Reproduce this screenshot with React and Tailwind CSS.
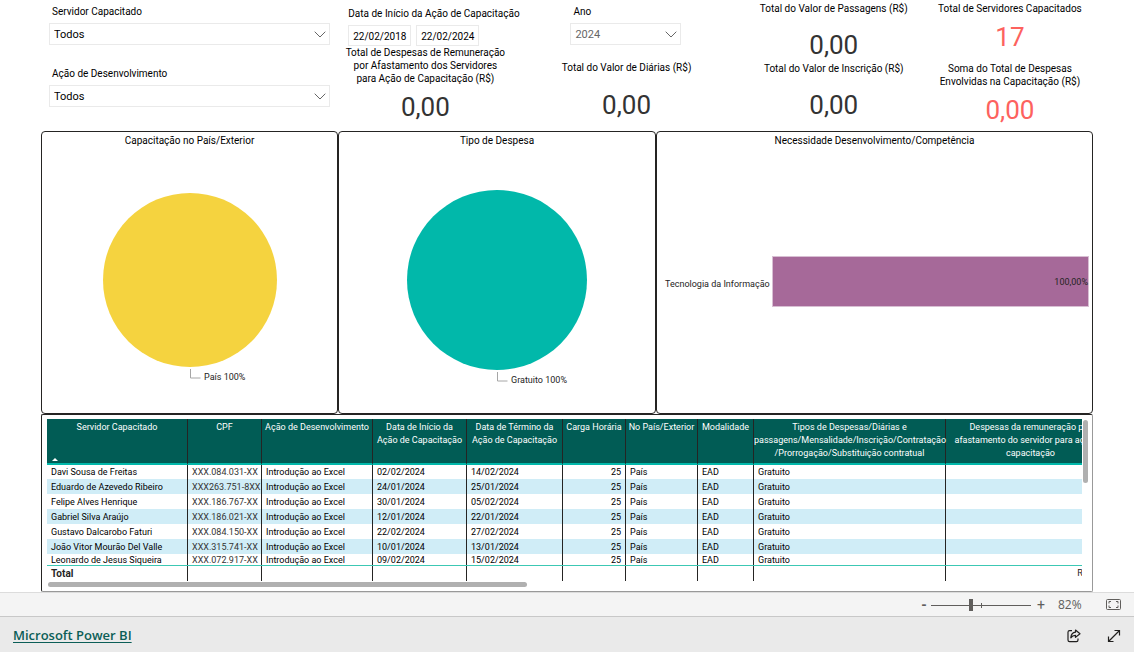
import React, { useState } from 'react';

const people = [
    { name: 'Davi Sousa de Freitas', cpf: 'XXX.084.031-XX', start: '02/02/2024', end: '14/02/2024' },
    { name: 'Eduardo de Azevedo Ribeiro', cpf: 'XXX263.751-8XX', start: '24/01/2024', end: '25/01/2024' },
    { name: 'Felipe Alves Henrique', cpf: 'XXX.186.767-XX', start: '30/01/2024', end: '05/02/2024' },
    { name: 'Gabriel Silva Araújo', cpf: 'XXX.186.021-XX', start: '12/01/2024', end: '22/01/2024' },
    { name: 'Gustavo Dalcarobo Faturi', cpf: 'XXX.084.150-XX', start: '22/02/2024', end: '27/02/2024' },
    { name: 'João Vitor Mourão Del Valle', cpf: 'XXX.315.741-XX', start: '10/01/2024', end: '13/01/2024' },
    { name: 'Leonardo de Jesus Siqueira', cpf: 'XXX.072.917-XX', start: '09/02/2024', end: '15/02/2024' },
];

const Columns = () => (
    <colgroup>
        <col className="w-[141px]" />
        <col className="w-[74px]" />
        <col className="w-[111px]" />
        <col className="w-[94px]" />
        <col className="w-[96px]" />
        <col className="w-[63px]" />
        <col className="w-[72px]" />
        <col className="w-[56px]" />
        <col className="w-[192px]" />
        <col className="w-[170px]" />
    </colgroup>
);

const Dropdown = ({ id, label, options, className }) => (
    <div className="flex flex-col gap-[3px]">
        <label htmlFor={id} className="pl-[3px] text-[10px] leading-4">{label}</label>
        <div className="relative">
            <select id={id} className={`block h-[22px] w-full appearance-none border border-[#eaeaea] bg-white pt-[3px] pl-1 text-[11px] outline-none ${className}`}>
                {options.map((o) => <option key={o}>{o}</option>)}
            </select>
            <svg viewBox="0 0 12 7" className="pointer-events-none absolute right-1 top-2 h-[7px] w-3" fill="none" stroke="#666">
                <path d="M.7.7 6 6 11.3.7" />
            </svg>
        </div>
    </div>
);

const Card = ({ label, value, className = '', valueClass = 'text-[#333]' }) => (
    <div className={`flex flex-col items-center text-center ${className}`}>
        <h2 className="text-[10px] leading-[13px] whitespace-pre">{label}</h2>
        <p className={`text-[26px] leading-8 ${valueClass}`}>{value}</p>
    </div>
);

const Panel = ({ title, children }) => (
    <section className="flex min-w-0 flex-col rounded-[4px] border border-[#252423]">
        <h2 className="pt-[2px] text-center text-[10px] leading-[14px]">{title}</h2>
        {children}
    </section>
);

const Pie = ({ label, color, r }) => (
    <svg viewBox="0 0 290 264" className="mx-auto h-[264px] w-[290px]">
        <circle cx="145" cy="132" r={r} fill={color} />
        <path d={`M145.5 ${134 + r}v9h10`} fill="none" stroke="#a6a6a6" />
        <text x="159" y={145 + r} className="fill-[#252423] text-[9px]">{label}</text>
    </svg>
);

const TrainingTable = () => (
    <section className="relative h-[178px] rounded-[2px] border border-[#252423] border-r-[#999] border-b-[#999] pt-1 pl-[5px] pr-[10px]">
        <div className="h-[147px] overflow-hidden border-b border-[#3cc8b4]">
            <table className="w-[1069px] table-fixed border-separate border-spacing-0 text-[9px]">
                <Columns />
                <thead className="bg-[#015c55] text-white">
                    <tr className="h-[46px] align-top leading-[13px] [&>th]:border-r [&>th]:border-b-2 [&>th]:border-r-[#252423] [&>th]:border-b-[#01b8aa] [&>th]:p-0 [&>th]:pt-[2px] [&>th]:font-normal [&>th]:whitespace-pre">
                        <th className="relative">
                            Servidor Capacitado
                            <span className="absolute bottom-[2px] left-[5px] border-x-[3px] border-b-[3px] border-x-transparent border-b-white" />
                        </th>
                        <th>CPF</th>
                        <th>Ação de Desenvolvimento</th>
                        <th>{'Data de Início da\nAção de Capacitação'}</th>
                        <th>{'Data de Término da\nAção de Capacitação'}</th>
                        <th>Carga Horária</th>
                        <th>No País/Exterior</th>
                        <th>Modalidade</th>
                        <th>{'Tipos de Despesas/Diárias e\npassagens/Mensalidade/Inscrição/Contratação\n/Prorrogação/Substituição contratual'}</th>
                        <th>{'Despesas da remuneração por\nafastamento do servidor para ação de\ncapacitação'}</th>
                    </tr>
                </thead>
                <tbody>
                    {people.map((p) => (
                        <tr key={p.cpf} className="h-[15px] leading-[14px] whitespace-nowrap first:h-[14px] last:h-3 last:leading-[13px] odd:bg-white even:bg-[#d0edf7] [&>td]:border-r [&>td]:border-[#252423] [&>td]:py-0 [&>td]:pr-1 [&>td]:pl-1">
                            <td>{p.name}</td>
                            <td className="text-[#333]">{p.cpf}</td>
                            <td>Introdução ao Excel</td>
                            <td>{p.start}</td>
                            <td>{p.end}</td>
                            <td className="text-right">25</td>
                            <td>País</td>
                            <td>EAD</td>
                            <td>Gratuito</td>
                            <td />
                        </tr>
                    ))}
                </tbody>
            </table>
        </div>
        <div className="overflow-hidden">
            <table className="w-[1069px] table-fixed border-separate border-spacing-0 text-[9px]">
                <Columns />
                <tbody>
                    <tr className="h-[15px] leading-[15px] text-[#252423] [&>td]:border-r [&>td]:border-[#252423] [&>td]:py-0">
                        <th className="border-r border-[#252423] py-0 pl-1 text-left text-[10px] font-bold">Total</th>
                        <td /><td /><td /><td /><td /><td /><td /><td />
                        <td className="pr-2 text-right">R$ 0,00</td>
                    </tr>
                </tbody>
            </table>
        </div>
        {/* scroll thumbs */}
        <span className="absolute bottom-1 left-[6px] h-[5px] w-[479px] rounded-full bg-[#b0b0b0]" />
        <span className="absolute top-[5px] right-1 h-[63px] w-[5px] rounded-full bg-[#b0b0b0]" />
    </section>
);

const App = () => {
    const [zoom, setZoom] = useState(40);

    return (
        <div className="flex min-h-screen flex-col bg-white font-['Roboto','Noto_Sans',sans-serif] text-black">
            <main className="mx-[41px] flex-1">
                <div className="grid h-[131px] grid-cols-[minmax(0,297fr)_minmax(0,174fr)_minmax(0,228fr)_minmax(0,186fr)_minmax(0,166fr)]">
                    <div className="flex flex-col gap-[21px] pt-1 pr-2 pl-2">
                        <Dropdown id="servidor" label="Servidor Capacitado" options={['Todos']} className="text-black" />
                        <Dropdown id="acao" label="Ação de Desenvolvimento" options={['Todos']} className="text-black" />
                    </div>
                    <div className="pt-[6px]">
                        <fieldset className="pl-[10px]">
                            <legend className="text-[10px] leading-4 whitespace-nowrap">Data de Início da Ação de Capacitação</legend>
                            <div className="flex gap-[5px] pt-[3px]">
                                <input aria-label="Data inicial" defaultValue="22/02/2018" className="h-[21px] w-[63px] border border-[#eaeaea] pt-[2px] text-center text-[10px] outline-none" />
                                <input aria-label="Data final" defaultValue="22/02/2024" className="h-[21px] w-[63px] border border-[#eaeaea] pt-[2px] text-center text-[10px] outline-none" />
                            </div>
                        </fieldset>
                        <Card label={'Total de Despesas de Remuneração\npor Afastamento dos Servidores\npara Ação de Capacitação (R$)'} value="0,00" className="gap-[6px]" />
                    </div>
                    <div className="flex flex-col gap-4 pt-1">
                        <div className="ml-[58px] w-[111px]">
                            <Dropdown id="ano" label="Ano" options={['2024']} className="text-[#666]" />
                        </div>
                        <Card label="Total do Valor de Diárias (R$)" value="0,00" className="gap-[15px]" />
                    </div>
                    <div className="flex flex-col pt-[2px]">
                        <Card label="Total do Valor de Passagens (R$)" value="0,00" className="gap-[14px] pb-px" />
                        <Card label="Total do Valor de Inscrição (R$)" value="0,00" className="gap-[14px]" />
                    </div>
                    <div className="flex flex-col gap-[9px] pt-[2px]">
                        <Card label="Total de Servidores Capacitados" value="17" valueClass="text-[#fd625e]" className="gap-[6px]" />
                        <Card label={'Soma do Total de Despesas\nEnvolvidas na Capacitação (R$)'} value="0,00" valueClass="text-[#fd625e]" className="gap-[6px]" />
                    </div>
                </div>

                <div className="grid h-[283px] grid-cols-[minmax(0,297fr)_minmax(0,318fr)_minmax(0,437fr)]">
                    <Panel title="Capacitação no País/Exterior">
                        <Pie label="País 100%" color="#f5d33f" r={87} />
                    </Panel>
                    <Panel title="Tipo de Despesa">
                        <Pie label="Gratuito 100%" color="#01b8aa" r={90} />
                    </Panel>
                    <Panel title="Necessidade Desenvolvimento/Competência">
                        <div className="flex flex-1 items-center gap-[2px] pt-[2px] pr-[3px] pl-2 text-[9px] text-[#252423]">
                            <span className="w-[105px] pt-[6px] whitespace-nowrap">Tecnologia da Informação</span>
                            <div className="flex h-[51px] flex-1 items-center justify-end border border-[#d8bfd3] bg-[#a66999] pt-[2px]">100,00%</div>
                        </div>
                    </Panel>
                </div>

                <TrainingTable />
            </main>

            <div className="flex h-6 items-center justify-end border-t border-[#dcdcdc] bg-[#f4f4f4] pr-[13px] text-[#605e5c]">
                <button aria-label="Reduzir" className="w-[14px] text-center text-[14px] leading-4 font-bold">-</button>
                <div className="relative flex h-3 w-[100px] items-center">
                    <span className="absolute top-[6px] h-px w-full bg-[#605e5c]" />
                    <span className="absolute top-1 left-1/2 h-[5px] w-px bg-[#605e5c]" />
                    <input
                        type="range"
                        aria-label="Zoom"
                        value={zoom}
                        onChange={(e) => setZoom(e.target.value)}
                        className="relative h-3 w-full appearance-none bg-transparent [&::-webkit-slider-thumb]:h-3 [&::-webkit-slider-thumb]:w-1 [&::-webkit-slider-thumb]:appearance-none [&::-webkit-slider-thumb]:bg-[#605e5c]"
                    />
                </div>
                <button aria-label="Ampliar" className="w-5 text-center text-[14px] leading-4">+</button>
                <span className="w-[55px] pl-[7px] font-['Open_Sans'] text-[12px] leading-4">82%</span>
                <button aria-label="Ajustar à página">
                    <svg viewBox="0 0 15 11" className="h-[11px] w-[15px]" fill="none" stroke="#605e5c">
                        <rect x=".5" y=".5" width="14" height="10" rx="1" />
                        <path d="M3 4.5v-2h2M10 2.500h2v2M12 6.500v2h-2M5 8.500H3v-2" />
                    </svg>
                </button>
            </div>

            <footer className="flex h-[37px] items-center justify-between border-t border-[#c8c8c8] bg-[#eaeaea] pt-[2px] pr-[13px] pl-[13px]">
                <a href="#powerbi" className="font-['Open_Sans'] text-[13px] font-semibold text-[#0b5e57] underline underline-offset-2">Microsoft Power BI</a>
                <div className="flex items-center gap-[26px]">
                    <button aria-label="Compartilhar">
                        <svg viewBox="0 0 14 14" className="size-[14px]" fill="none" stroke="#201f1e" strokeWidth="1.2" strokeLinejoin="round">
                            <path d="M5 1.600H2.600Q1 1.600 1 3.200v7.800q0 1.600 1.600 1.600h6.800q1.600 0 1.600-1.600V9.500" />
                            <path d="M8.500 1 13 4.700 8.500 8.400V6.300Q5.500 6.200 3.800 8.800 4.300 3.500 8.500 3.200z" />
                        </svg>
                    </button>
                    <button aria-label="Tela cheia">
                        <svg viewBox="0 0 14 14" className="size-[14px]" fill="none" stroke="#201f1e" strokeWidth="1.2">
                            <path d="M1.500 12.500l11-11M7.500 1.500h5v5M1.500 7.500v5h5" />
                        </svg>
                    </button>
                </div>
            </footer>
        </div>
    );
};

export default App;
